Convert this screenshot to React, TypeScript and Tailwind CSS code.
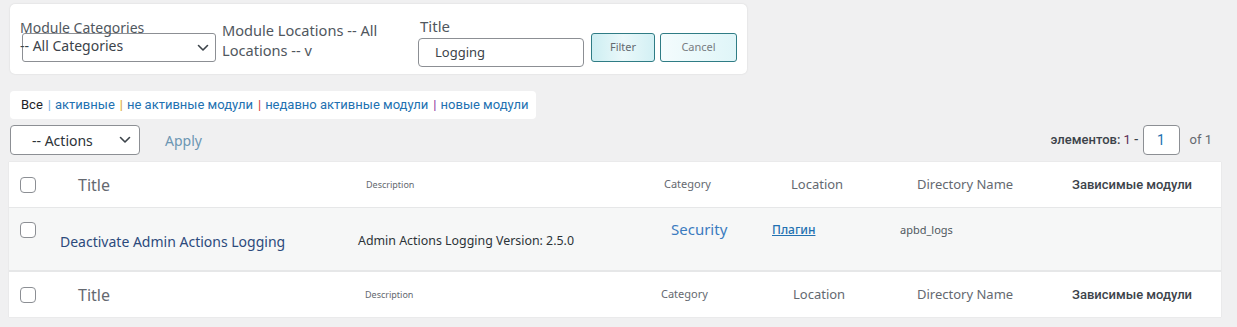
import React from 'react';

function Chevron() {
  return (
    <svg width="12" height="8" viewBox="0 0 12 8" fill="none">
      <path d="M1.5 1.5L6 6l4.5-4.5" stroke="#3c434a" strokeWidth="1.6" strokeLinecap="round" strokeLinejoin="round" />
    </svg>
  );
}

function Check() {
  return <span className="block w-4 h-4 rounded-[4px] border border-[#8c8f94] bg-white" />;
}

const cols = 'grid grid-cols-[41px_299px_291px_122px_128px_160px_1fr]';

function HeadRow({ bottom }: { bottom?: boolean }) {
  return (
    <div className={`${cols} items-center h-[46px] text-[#646970] ${bottom ? 'border-t border-[#e6e7e8]' : 'border-b border-[#e6e7e8]'}`}>
      <div className="pl-[11px]"><Check /></div>
      <div className="pl-[28px] text-[16px]">Title</div>
      <div className={`${bottom ? 'pl-[16px]' : 'pl-[17px]'} text-[9px]`}>Description</div>
      <div className={`${bottom ? 'pl-[21px]' : 'pl-[24px]'} text-[11px]`}>Category</div>
      <div className={`${bottom ? 'pl-[31px]' : 'pl-[29px]'} text-[13px]`}>Location</div>
      <div className="pl-[27px] text-[13px]">Directory Name</div>
      <div className="pl-[22px] text-[13px] font-medium text-[#3c434a] font-['Roboto',sans-serif]">Зависимые модули</div>
    </div>
  );
}

export default function App() {
  const views = [
    { label: 'активные', sep: '#72aee6' },
    { label: 'не активные модули', sep: '#dba617' },
    { label: 'недавно активные модули', sep: '#d63638' },
    { label: 'новые модули', sep: '#8a2fa0' },
  ];

  return (
    <div className="w-[1237px] h-[327px] bg-[#f0f0f1] font-['Noto_Sans',sans-serif] overflow-hidden">
      <div className="pt-[4px] pl-[10px]">
        {/* filter box */}
        <div className="w-[737px] h-[70px] bg-white rounded-[5px] shadow-[0_0_2px_rgba(0,0,0,0.12)] flex items-start pl-[10px] text-[#50575e]">
          <div className="w-[202px] pt-[15px] relative">
            <div className="text-[14px] leading-[17px]">Module Categories</div>
            <div className="ml-[2px] mt-[-3px] w-[194px] h-[29px] border border-[#8c8f94] rounded-[3px] flex items-center justify-end pr-[6px]">
              <Chevron />
            </div>
            <div className="absolute left-0 top-[34px] text-[14px] leading-[16px] text-[#3c434a]">-- All Categories</div>
          </div>
          <div className="w-[196px] pt-[16px] text-[14.6px] leading-[20px]">
            <div>Module Locations -- All</div>
            <div>Locations -- v</div>
          </div>
          <div className="w-[173px] pt-[12px]">
            <div className="text-[15px] leading-[20px] pl-[2px]">Title</div>
            <div className="w-[166px] h-[29px] mt-[2px] border border-[#8c8f94] rounded-[4px] pl-[16px] flex items-center text-[13px] text-[#3c434a]">
              Logging
            </div>
          </div>
          <div className="flex gap-[5px] pt-[29px]">
            <button className="w-[64px] h-[29px] rounded-[3px] border border-[#2f7c85] bg-gradient-to-r from-[#cdeef2] via-[#eaf8fa] to-[#d3f0f4] text-[11px] text-[#646970]">Filter</button>
            <button className="w-[77px] h-[29px] rounded-[3px] border border-[#2f7c85] bg-gradient-to-r from-[#f4fcfd] to-[#dff5f8] text-[11px] text-[#787c82]">Cancel</button>
          </div>
        </div>

        {/* views */}
        <div className="mt-[17px] w-[526px] h-[28px] bg-white rounded-[4px] flex items-center pl-[11px] text-[13px] font-['Roboto',sans-serif]">
          <span className="text-[#1d2327]">Все</span>
          {views.map((v) => (
            <React.Fragment key={v.label}>
              <span className="ml-[5px] mr-[4px]" style={{ color: v.sep }}>|</span>
              <span className="text-[#2271b1]">{v.label}</span>
            </React.Fragment>
          ))}
        </div>

        {/* actions + pagination */}
        <div className="mt-[6px] h-[30px] flex items-center justify-between pr-[25px]">
          <div className="flex items-center">
            <div className="w-[130px] h-[30px] bg-white border border-[#8c8f94] rounded-[4px] flex items-center justify-between pl-[21px] pr-[8px] text-[14px] text-[#2c3338]">
              <span>-- Actions</span>
              <Chevron />
            </div>
            <span className="ml-[25px] text-[14px] text-[#6c96b3]">Apply</span>
          </div>
          <div className="flex items-center text-[13px] font-['Roboto',sans-serif] text-[#3c434a]">
            <span className="font-medium">элементов: <span className="text-[#5b2c55] font-normal">1</span> -</span>
            <div className="ml-[4px] w-[37px] h-[30px] bg-white border border-[#8c8f94] rounded-[4px] flex items-center justify-center text-[#2271b1] text-[14px]">1</div>
            <span className="ml-[10px] text-[#646970]">of 1</span>
          </div>
        </div>

        {/* table */}
        <div className="mt-[7px] ml-[-1px] w-[1212px] bg-white shadow-[0_0_1px_rgba(0,0,0,0.15)]">
          <HeadRow />
          <div className={`${cols} h-[63px] bg-[#f6f7f7] border-b border-[#e6e7e8] items-start`}>
            <div className="pl-[11px] pt-[14px]"><Check /></div>
            <div className="pt-[23px] pl-[10px] text-[14px] text-[#2c4a7c]">Deactivate Admin Actions Logging</div>
            <div className="pt-[24px] pl-[9px] text-[12.4px] text-[#2c3338]">Admin Actions Logging Version: 2.5.0</div>
            <div className="pt-[10px] pl-[31px] text-[15px] text-[#3b7bbf]">Security</div>
            <div className="pt-[13px] pl-[10px] text-[12px] text-[#2271b1] underline font-medium">Плагин</div>
            <div className="pt-[14px] pl-[10px] text-[11px] text-[#50575e]">apbd_logs</div>
            <div />
          </div>
          <HeadRow bottom />
        </div>
      </div>
    </div>
  );
}
